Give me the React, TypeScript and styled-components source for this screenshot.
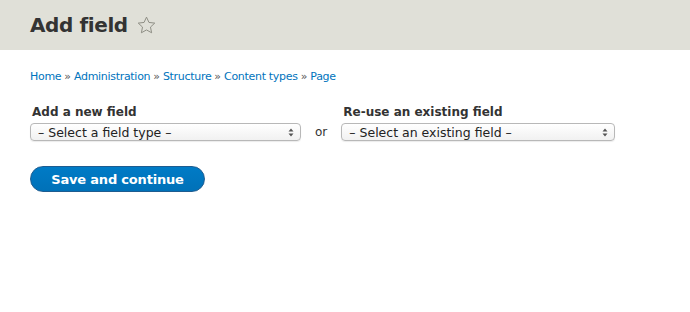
import styled, { createGlobalStyle } from 'styled-components';

const GlobalStyle = createGlobalStyle`
  html, body {
    margin: 0;
    padding: 0;
    background: #ffffff;
  }
  body {
    font-family: "DejaVu Sans", "Liberation Sans", sans-serif;
    color: #333333;
  }
`;

const Page = styled.div`
  width: 690px;
  height: 312px;
  background: #ffffff;
`;

const Header = styled.header`
  height: 50px;
  background: #e0e0d8;
  display: flex;
  align-items: center;
  padding: 0 30px;
  box-sizing: border-box;
`;

const Title = styled.h1`
  margin: 0;
  font-size: 20px;
  font-weight: bold;
  color: #333333;
  display: flex;
  align-items: center;
  gap: 9px;
  letter-spacing: -0.4px;
`;

const Content = styled.main`
  padding: 20px 30px 0;
`;

const Breadcrumb = styled.nav`
  font-size: 11px;
  letter-spacing: -0.3px;
  color: #333333;
  display: flex;
  gap: 3px;
`;

const Crumb = styled.a`
  color: #0074bd;
  text-decoration: none;
`;

const Sep = styled.span`
  color: #555555;
`;

const FieldRow = styled.div`
  margin-top: 22px;
  display: flex;
  align-items: flex-end;
`;

const FieldGroup = styled.div`
  display: flex;
  flex-direction: column;
  gap: 4px;
`;

const Label = styled.label`
  font-size: 12px;
  font-weight: bold;
  color: #333333;
  padding-left: 2px;
`;

const Select = styled.div<{ $width: number }>`
  width: ${({ $width }) => $width}px;
  height: 18px;
  box-sizing: border-box;
  border: 1px solid #b8b8b8;
  border-radius: 4px;
  background: linear-gradient(#ffffff, #f1f1f1);
  box-shadow: 0 1px 1px rgba(0, 0, 0, 0.08);
  display: flex;
  align-items: center;
  justify-content: space-between;
  padding: 0 6px 0 7px;
  font-size: 12.5px;
  color: #222222;
`;

const Or = styled.span`
  font-size: 12px;
  color: #333333;
  padding: 0 14px 2px 14px;
`;

const Button = styled.button`
  margin-top: 25px;
  width: 175px;
  height: 26px;
  border-radius: 13px;
  border: 1px solid #1e5c90;
  background: linear-gradient(#007bc6, #0071b8);
  color: #ffffff;
  font-family: "DejaVu Sans", "Liberation Sans", sans-serif;
  font-size: 13px;
  letter-spacing: -0.2px;
  font-weight: bold;
  padding: 0;
  display: flex;
  align-items: center;
  justify-content: center;
`;

const Star = () => (
  <svg width="19" height="18" viewBox="0 0 20 19">
    <path
      d="M10 1.2l2.6 5.6 6.1.7-4.5 4.2 1.2 6-5.4-3-5.4 3 1.2-6-4.5-4.2 6.1-.7z"
      fill="none"
      stroke="#8a8a80"
      strokeWidth="1"
      strokeLinejoin="round"
    />
  </svg>
);

const Arrows = () => (
  <svg width="6" height="9" viewBox="0 0 6 9">
    <path d="M3 0.5L5.5 3.5H0.5z M3 8.5L5.5 5.5H0.5z" fill="#555555" />
  </svg>
);

const crumbs = ['Home', 'Administration', 'Structure', 'Content types', 'Page'];

export default function App() {
  return (
    <Page>
      <GlobalStyle />
      <Header>
        <Title>
          Add field <Star />
        </Title>
      </Header>
      <Content>
        <Breadcrumb>
          {crumbs.map((c, i) => (
            <span key={c}>
              {i > 0 && <Sep>» </Sep>}
              <Crumb href="#">{c}</Crumb>
            </span>
          ))}
        </Breadcrumb>
        <FieldRow>
          <FieldGroup>
            <Label>Add a new field</Label>
            <Select $width={271}>
              <span>– Select a field type –</span>
              <Arrows />
            </Select>
          </FieldGroup>
          <Or>or</Or>
          <FieldGroup>
            <Label>Re-use an existing field</Label>
            <Select $width={274}>
              <span>– Select an existing field –</span>
              <Arrows />
            </Select>
          </FieldGroup>
        </FieldRow>
        <Button>Save and continue</Button>
      </Content>
    </Page>
  );
}
